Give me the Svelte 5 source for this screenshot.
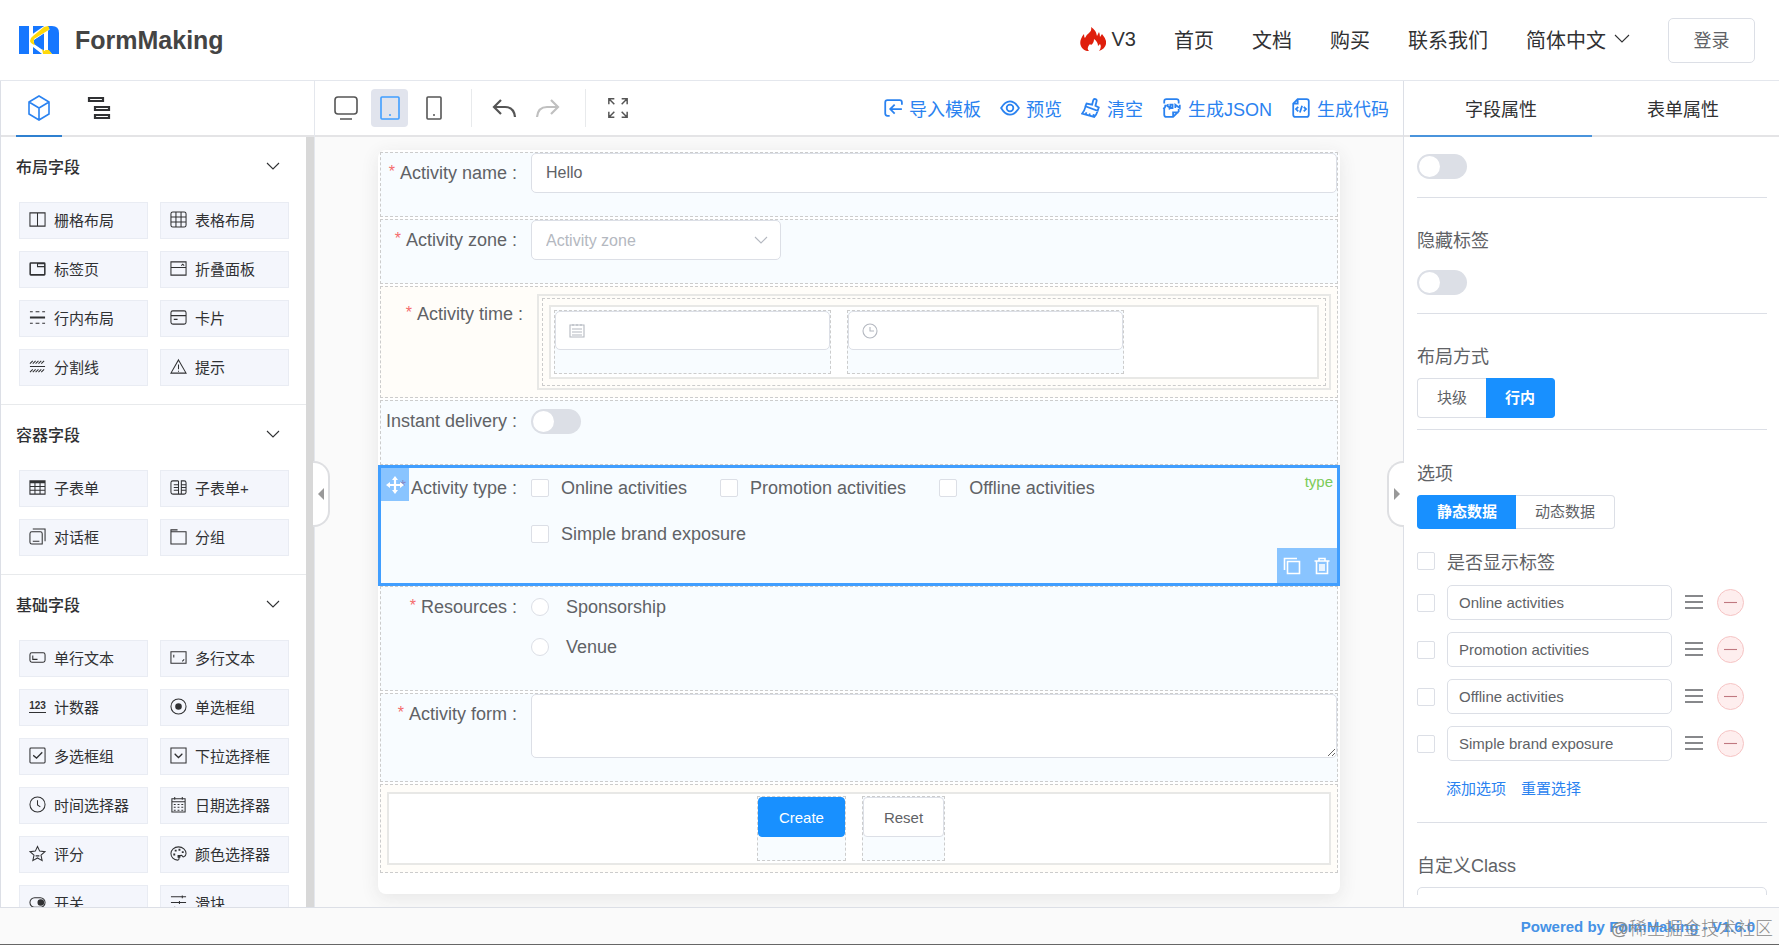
<script lang="ts">
  type Item = { label: string; d?: string; fill?: string; text?: string };
  type Group = { title: string; items: Item[] };

  // every icon lives on an 18x18 grid
  const groups: Group[] = [
    {
      title: '布局字段',
      items: [
        { label: '栅格布局', d: 'M1 2h16v14H1zM9 2v14' },
        { label: '表格布局', d: 'M3 1h12a2 2 0 0 1 2 2v12a2 2 0 0 1-2 2H3a2 2 0 0 1-2-2V3a2 2 0 0 1 2-2zM6.3 1v16M11.7 1v16M1 6.3h16M1 11.7h16' },
        { label: '标签页', d: 'M2 3h14q1 0 1 1v11q0 1-1 1H2q-1 0-1-1V4q0-1 1-1zM9 3v4h8M9 4h7M1.500 3.500h15v12h-15z' },
        { label: '折叠面板', d: 'M1 2h16v14H1zM1 8h16M12 6l1.500-1.500L15 6' },
        { label: '行内布局', d: 'M1 8.500h16M1 9.500h16M1 3h3M7 3h4M14 3h3M1 15h3M7 15h4M14 15h3' },
        { label: '卡片', d: 'M3 2h12a2 2 0 0 1 2 2v10a2 2 0 0 1-2 2H3a2 2 0 0 1-2-2V4a2 2 0 0 1 2-2zM1 7h16M4 11h4' },
        { label: '分割线', d: 'M1 9h16M1 6l3-3M4 6l3-3M7 6l3-3M10 6l3-3M13 6l3-3M1 15l3-3M4 15l3-3M7 15l3-3M10 15l3-3M13 15l3-3' },
        { label: '提示', d: 'M9 2l8 14H1zM9 7v5M9 13.500v1' }
      ]
    },
    {
      title: '容器字段',
      items: [
        { label: '子表单', d: 'M1 2h16v14H1zM1 3h16M1 4h16M1 8h16M1 12h16M6.300 3v13M11.700 3v13' },
        { label: '子表单+', d: 'M9 2v14M9 2H3a2 2 0 0 0-2 2v10a2 2 0 0 0 2 2h12a2 2 0 0 0 2-2V4a2 2 0 0 0-2-2h-3v14M4 6h5M4 9h5M4 12h5M12 6h5M12 9h5M12 12h5' },
        { label: '对话框', d: 'M3 4h9a2 2 0 0 1 2 2v11H3a2 2 0 0 1-2-2V6a2 2 0 0 1 2-2zM4 1h13v13M4 14h7' },
        { label: '分组', d: 'M1 4h16v13H1zM1 4V2h7' }
      ]
    },
    {
      title: '基础字段',
      items: [
        { label: '单行文本', d: 'M3 4h12a2 2 0 0 1 2 2v6a2 2 0 0 1-2 2H3a2 2 0 0 1-2-2V6a2 2 0 0 1 2-2zM4 7v4h5' },
        { label: '多行文本', d: 'M1 3h16v12H1zM4 6v3M13 13l2-2' },
        { label: '计数器', text: '123' },
        { label: '单选框组', d: 'M9 1a8 8 0 1 0 0 16a8 8 0 1 0 0-16z', fill: 'M9 5.500a3.500 3.500 0 1 0 0 7a3.500 3.500 0 1 0 0-7z' },
        { label: '多选框组', d: 'M2 1h14q1 0 1 1v14q0 1-1 1H2q-1 0-1-1V2q0-1 1-1zM4.500 9l3.500 3 6-6M4.500 8.500l3.500 3 6-6' },
        { label: '下拉选择框', d: 'M1 1h16v16H1zM5 7.500l4 4 4-4M5 7l4 4 4-4' },
        { label: '时间选择器', d: 'M9 1a8 8 0 1 0 0 16a8 8 0 1 0 0-16zM9 4.500v5l3 2' },
        { label: '日期选择器', d: 'M2 3h14v14H2zM2 6h14M5 1v3M13 1v3M4 9h2M8 9h2M12 9h2M4 12h2M8 12h2M12 12h2M4 15h2M8 15h2M12 15h2' },
        { label: '评分', d: 'M9 1.500l2.300 5 5.500.6-4.100 3.700 1.200 5.700L9 13.700l-4.900 2.800 1.200-5.700L1.200 7.100l5.500-.6zM7 11.500h4' },
        { label: '颜色选择器', d: 'M9 2C4.500 2 1 5 1 9s3 7 7 7c2 0 1.500-2 1.500-3s1-2 2.500-2 1 2 2.500 1.500S17 10.500 17 9c0-4-3.500-7-8-7z', fill: 'M5 5h2v2H5zM9 4h2v2H9zM12.500 6.500h2v2h-2zM3.500 9h2v2h-2zM8 10.500h3v3H8z' },
        { label: '开关', d: 'M6 4h6a5 5 0 0 1 0 10H6A5 5 0 0 1 6 4z', fill: 'M12.500 5.500a3.500 3.500 0 1 0 0 7a3.500 3.500 0 1 0 0-7z' },
        { label: '滑块', d: 'M1 3h16M1 9h16M1 15h16M13 1.500v3M10 7.500v3M5 13.500v3' }
      ]
    }
  ];

  const nav = ['首页', '文档', '购买', '联系我们'];

  const actions = [
    { label: '导入模板', d: 'M17 6V4a2 2 0 0 0-2-2H4a2 2 0 0 0-2 2v10a2 2 0 0 0 2 2h2M17 10H7M10.500 6L6.500 10l4 4' },
    { label: '预览', d: 'M1 9q3.500-6 8-6t8 6q-3.500 6-8 6T1 9zM9 6a3 3 0 1 0 0 6a3 3 0 1 0 0-6z' },
    { label: '清空', d: 'M10 6l1-4q.5-1.500 2-1t1 2l-1 4 3 1.500-1 3L4 7.500l1-2.500zM4 8q-1 4-3 6l11 3q2-2 3-5.500M4 15l1-2M7.500 16l.5-2M11 16.500l.5-2' },
    { label: '生成JSON', d: 'M2 5V3a2 2 0 0 1 2-2h9a2 2 0 0 1 2 2v2M2 10v5a2 2 0 0 0 2 2h6l5-5v-2M10 17v-4h5M1 9q2 1 2-3M6 6q-3 1 0 2t0 2M7.500 6h2v3h-2zM12 9V6l4 3V6' },
    { label: '生成代码', d: 'M6 1h8a2 2 0 0 1 2 2v12a2 2 0 0 1-2 2H4a2 2 0 0 1-2-2V5zM6 1v4H2M6.500 8l-2 2 2 2M11.500 8l2 2-2 2M10 7l-2 6' }
  ];

  let name = 'Hello';
  let zone = '';
  let layout = 'inline';
  let source = 'static';
  let activities = [
    'Online activities',
    'Promotion activities',
    'Offline activities',
    'Simple brand exposure'
  ];
  const resources = ['Sponsorship', 'Venue'];

  function removeOption(i: number) {
    activities = activities.filter((_, n) => n !== i);
  }
</script>

<div class="app">
  <header class="header">
    <a class="brand" href="#home">
      <svg width="40" height="28" viewBox="0 0 40 28">
        <path fill="#1677ff" d="M0 0h10v28H0zM14 0h11v28H14zM29 0h4q7 0 7 7v21h-7l-4-4z" />
        <path fill="none" stroke="#fff" stroke-width="6" d="M29 1L13 12v5l13 10" />
        <path fill="#1677ff" d="M15 14l10-6v17l-10-7zM14 21l9 7h-9z" />
        <path fill="#ffd90a" d="M29 0q3 3-1 5L15 13q-1 3 1 6-4-1-5-4 0-3 3-5L25 1zM23 23l7 5h-6zM26 24h4l3 4h-6z" />
      </svg>
      <span>FormMaking</span>
    </a>
    <nav class="nav">
      <a class="v3" href="#v3">
        <svg width="26" height="24" viewBox="0 0 26 24">
          <path
            fill="#df1f0c"
            d="M7 24C1 22-1 17 1 12q1-3 3-5 0 3 1 4Q6 8 9 6q3-2 2-6 5 3 6 9l2-4q1 2 1 5l2-3q5 6 4 10-1 5-7 7 3-4 1-7l-2 2q0-4-4-7 0 4-3 6l-1-1q-4 4-1 7z"
          />
        </svg>
        V3
      </a>
      {#each nav as item}
        <a href="#nav">{item}</a>
      {/each}
      <button class="lang">
        简体中文
        <svg width="16" height="10" viewBox="0 0 16 10"><path class="line" d="M1 1l7 7 7-7" /></svg>
      </button>
      <button class="login">登录</button>
    </nav>
  </header>

  <main class="body">
    <aside class="left">
      <div class="left-tabs">
        <button class="tab active" aria-label="组件">
          <svg width="22" height="26" viewBox="0 0 22 26">
            <path class="line bold" d="M11 1l10 6v12l-10 6-10-6V7zM1 7l10 6 10-6M11 13v12" />
          </svg>
        </button>
        <button class="tab" aria-label="大纲">
          <svg width="24" height="26" viewBox="0 0 24 26">
            <path class="line thick" d="M2 3h14v3H2zM8 12h14v3H8zM8 20h14v3H8z" />
          </svg>
        </button>
      </div>
      <div class="palette">
        {#each groups as group}
          <section class="group">
            <div class="group-title">
              <span>{group.title}</span>
              <svg width="14" height="8" viewBox="0 0 14 8"><path class="line" d="M1 1l6 6 6-6" /></svg>
            </div>
            <div class="items">
              {#each group.items as item}
                <button class="item">
                  {#if item.text}
                    <span class="num">{item.text}</span>
                  {:else}
                    <svg width="17" height="17" viewBox="0 0 18 18">
                      <path class="line" d={item.d} />
                      {#if item.fill}<path fill="currentColor" d={item.fill} />{/if}
                    </svg>
                  {/if}
                  <span>{item.label}</span>
                </button>
              {/each}
            </div>
          </section>
        {/each}
      </div>
      <button class="handle handle-left" aria-label="收起左侧"></button>
    </aside>

    <section class="center">
      <div class="toolbar">
        <div class="devices">
          <button class="tool" aria-label="PC">
            <svg width="24" height="26" viewBox="0 0 24 26">
              <path class="line bold" d="M4 2h16a3 3 0 0 1 3 3v11a3 3 0 0 1-3 3H4a3 3 0 0 1-3-3V5a3 3 0 0 1 3-3zM6 24h12" />
            </svg>
          </button>
          <button class="tool selected" aria-label="Pad">
            <svg width="20" height="26" viewBox="0 0 20 26">
              <path class="line bold" d="M2 2h16q1 0 1 1v20q0 1-1 1H2q-1 0-1-1V3q0-1 1-1zM9 20h2" />
            </svg>
          </button>
          <button class="tool" aria-label="Mobile">
            <svg width="16" height="26" viewBox="0 0 16 26">
              <path class="line bold" d="M2 2h12q1 0 1 1v20q0 1-1 1H2q-1 0-1-1V3q0-1 1-1zM7 20h2" />
            </svg>
          </button>
        </div>
        <div class="history">
          <button class="tool" aria-label="撤销">
            <svg width="26" height="22" viewBox="0 0 26 22">
              <path class="line thick" d="M10 3L3 10l7 7M3 10h11q9 0 10 10" />
            </svg>
          </button>
          <button class="tool" aria-label="重做" disabled>
            <svg width="26" height="22" viewBox="0 0 26 22">
              <path class="line thick" d="M16 3l7 7-7 7M23 10H12Q3 10 2 20" />
            </svg>
          </button>
        </div>
        <button class="tool" aria-label="全屏">
          <svg width="22" height="22" viewBox="0 0 24 24">
            <path class="line bold" d="M2 8V2h6M2 2l6 6M16 2h6v6M22 2l-6 6M2 16v6h6M2 22l6-6M22 16v6h-6M22 22l-6-6" />
          </svg>
        </button>
        <div class="actions">
          {#each actions as action}
            <button class="action">
              <svg width="20" height="20" viewBox="0 0 18 18"><path class="line bold" d={action.d} /></svg>
              {action.label}
            </button>
          {/each}
        </div>
      </div>

      <div class="canvas">
        <form class="form" on:submit|preventDefault>
          <div class="widget">
            <label class="label required" for="name">Activity name :</label>
            <input id="name" class="control" type="text" bind:value={name} />
          </div>

          <div class="widget">
            <label class="label required" for="zone">Activity zone :</label>
            <div class="select">
              <select id="zone" class="control" bind:value={zone}>
                <option value="">Activity zone</option>
              </select>
              <svg width="14" height="8" viewBox="0 0 14 8"><path class="line" d="M1 1l6 6 6-6" /></svg>
            </div>
          </div>

          <div class="widget container">
            <span class="label required">Activity time :</span>
            <div class="frame outer">
              <div class="nested">
                <div class="frame inner">
                  <div class="widget picker">
                    <svg width="16" height="16" viewBox="0 0 16 16">
                      <path class="line" d="M1 2h14v12H1zM4 1v2M8 1v2M12 1v2M3 6h10M3 9h10M3 12h10" />
                    </svg>
                    <input class="control" type="text" aria-label="Activity date" />
                  </div>
                  <div class="widget picker">
                    <svg width="16" height="16" viewBox="0 0 16 16">
                      <path class="line" d="M8 1a7 7 0 1 0 0 14a7 7 0 1 0 0-14zM8 4v4h4" />
                    </svg>
                    <input class="control" type="text" aria-label="Activity hour" />
                  </div>
                </div>
              </div>
            </div>
          </div>

          <div class="widget">
            <label class="label" for="delivery">Instant delivery :</label>
            <div class="line-box"><input id="delivery" class="switch" type="checkbox" role="switch" /></div>
          </div>

          <div class="widget current">
            <span class="label required">Activity type :</span>
            <div class="checks">
              {#each activities as option}
                <label class="check"><input class="box" type="checkbox" />{option}</label>
              {/each}
            </div>
            <span class="drag">
              <svg width="18" height="18" viewBox="0 0 18 18">
                <path class="line thick" d="M9 3v12M3 9h12" />
                <path fill="currentColor" d="M9 0l3 4H6zM9 18l3-4H6zM0 9l4-3v6zM18 9l-4-3v6z" />
              </svg>
            </span>
            <span class="model">type</span>
            <div class="ops">
              <button type="button" aria-label="复制">
                <svg width="18" height="18" viewBox="0 0 18 18">
                  <path class="line bold" d="M4.500 4.500h12v12h-12zM1.500 13V1.500H14" />
                </svg>
              </button>
              <button type="button" aria-label="删除">
                <svg width="18" height="18" viewBox="0 0 18 18">
                  <path class="line bold" d="M1.500 4h15M6 4V1.500h6V4M3.500 4v12.500h11V4M7 7v7M9 7v7M11 7v7" />
                </svg>
              </button>
            </div>
          </div>

          <div class="widget">
            <span class="label required">Resources :</span>
            <div class="radios">
              {#each resources as option}
                <label class="radio"><input class="box" type="radio" name="resources" />{option}</label>
              {/each}
            </div>
          </div>

          <div class="widget">
            <label class="label required" for="desc">Activity form :</label>
            <textarea id="desc" class="control"></textarea>
          </div>

          <div class="widget container">
            <div class="frame buttons">
              <div class="widget"><button class="btn primary">Create</button></div>
              <div class="widget"><button class="btn" type="reset">Reset</button></div>
            </div>
          </div>
        </form>
      </div>
    </section>

    <aside class="right">
      <div class="right-tabs">
        <button class="active">字段属性</button>
        <button>表单属性</button>
      </div>
      <div class="props">
        <div class="prop first">
          <input class="switch" type="checkbox" role="switch" aria-label="开启" />
        </div>
        <div class="prop">
          <label class="prop-title" for="hide-label">隐藏标签</label>
          <div class="line-box"><input id="hide-label" class="switch" type="checkbox" role="switch" /></div>
        </div>
        <div class="prop tight">
          <div class="prop-title">布局方式</div>
          <div class="segment">
            <label><input type="radio" bind:group={layout} value="block" /><span>块级</span></label>
            <label><input type="radio" bind:group={layout} value="inline" /><span>行内</span></label>
          </div>
        </div>
        <div class="prop options">
          <div class="prop-title">选项</div>
          <div class="segment small">
            <label><input type="radio" bind:group={source} value="static" /><span>静态数据</span></label>
            <label><input type="radio" bind:group={source} value="dynamic" /><span>动态数据</span></label>
          </div>
          <label class="show-label"><input class="box" type="checkbox" />是否显示标签</label>
          {#each activities as option, i}
            <div class="option">
              <input class="box" type="checkbox" aria-label="默认选中" />
              <input class="control" type="text" aria-label="选项" bind:value={option} />
              <svg width="20" height="16" viewBox="0 0 20 16">
                <path class="line bold" d="M1 1h18M1 7h18M1 13h18" />
              </svg>
              <button class="remove" aria-label="移除" on:click={() => removeOption(i)}>
                <svg width="13" height="13" viewBox="0 0 13 13"><path class="line" d="M0 6.500h13" /></svg>
              </button>
            </div>
          {/each}
          <div class="links">
            <button>添加选项</button>
            <button>重置选择</button>
          </div>
        </div>
        <div class="prop">
          <label class="prop-title" for="class">自定义Class</label>
          <input id="class" class="control" type="text" />
        </div>
      </div>
      <button class="handle handle-right" aria-label="收起右侧"></button>
    </aside>
  </main>

  <footer class="footer">
    <a href="#powered">Powered by FormMaking - V1.6.0</a>
    <span class="mark">@稀土掘金技术社区</span>
  </footer>
</div>

<style>
  .app,
  .app * {
    box-sizing: border-box;
  }
  .app {
    display: flex;
    flex-direction: column;
    height: 100vh;
    overflow: hidden;
    font-family: 'Liberation Sans', 'Noto Sans CJK SC', sans-serif;
    font-size: 18px;
    color: #606266;
    background: #fff;
    border-bottom: 1px solid #666;
  }
  button,
  input,
  select,
  textarea {
    font: inherit;
    color: inherit;
    margin: 0;
  }
  button {
    padding: 0;
    border: 0;
    background: none;
  }
  a {
    color: inherit;
    text-decoration: none;
  }
  svg {
    display: block;
    flex: none;
  }
  .line {
    fill: none;
    stroke: currentColor;
    stroke-width: 1.1;
  }
  .line.bold {
    stroke-width: 1.6;
  }
  .line.thick {
    stroke-width: 2.2;
  }

  .header {
    flex: none;
    display: flex;
    align-items: center;
    justify-content: space-between;
    height: 81px;
    padding: 0 24px 0 19px;
    border-bottom: 1px solid #e4e7ed;
  }
  .brand {
    display: flex;
    align-items: center;
    gap: 16px;
    font-size: 25px;
    font-weight: 700;
    color: #444;
  }
  .nav {
    display: flex;
    align-items: center;
    gap: 38px;
    font-size: 20px;
    color: #303133;
  }
  .nav > * {
    padding-bottom: 2px;
  }
  .v3 {
    display: flex;
    align-items: center;
    gap: 6px;
  }
  .lang {
    display: flex;
    align-items: center;
    gap: 8px;
  }
  .login {
    width: 87px;
    height: 45px;
    border: 1px solid #dcdfe6;
    border-radius: 5px;
    font-size: 18px;
    color: #606266;
  }

  .body {
    flex: 1;
    min-height: 0;
    display: flex;
  }
  .left {
    position: relative;
    flex: none;
    width: 315px;
    display: flex;
    flex-direction: column;
    border-left: 1px solid #dcdfe6;
    border-right: 1px solid #e4e7ed;
    color: #303133;
  }
  .left-tabs,
  .right-tabs,
  .toolbar {
    flex: none;
    display: flex;
    height: 56px;
    border-bottom: 2px solid #e4e4e6;
  }
  .left-tabs {
    gap: 14px;
    padding-left: 15px;
  }
  .tab {
    display: grid;
    place-items: center;
    width: 46px;
    height: 56px;
    border-bottom: 2px solid transparent;
  }
  .tab.active {
    color: #2a82f0;
    border-color: #2f80d0;
  }
  .palette {
    flex: 1;
    min-height: 0;
    overflow: hidden;
    border-right: 8px solid #d8d8d8;
  }
  .group {
    padding-bottom: 18px;
    border-bottom: 1px solid #e8eaec;
  }
  .group-title {
    display: flex;
    align-items: center;
    justify-content: space-between;
    height: 60px;
    padding: 0 26px 2px 15px;
    font-size: 16px;
    font-weight: 500;
  }
  .items {
    display: grid;
    grid-template-columns: 1fr 1fr;
    gap: 12px;
    padding: 5px 17px 0 18px;
  }
  .item {
    display: flex;
    align-items: center;
    gap: 8px;
    height: 37px;
    padding: 0 9px 2px;
    border: 1px solid #e9ecf3;
    background: #f4f6fc;
    font-size: 15px;
  }
  .num {
    width: 17px;
    font-size: 10px;
    font-weight: 700;
    line-height: 12px;
    border-bottom: 1px solid;
  }
  .handle {
    position: absolute;
    top: 380px;
    z-index: 1;
    display: grid;
    place-items: center;
    width: 17px;
    height: 66px;
    border: 2px solid #dedfe2;
    background: #fff;
  }
  .handle::before {
    content: '';
    border: 6px solid transparent;
  }
  .handle-left {
    right: -16px;
    border-left: 0;
    border-radius: 0 16px 16px 0;
  }
  .handle-left::before {
    border-left-width: 0;
    border-right-color: #999;
  }
  .handle-right {
    left: -17px;
    border-right: 0;
    border-radius: 16px 0 0 16px;
  }
  .handle-right::before {
    border-right-width: 0;
    border-left-color: #999;
  }

  .center {
    flex: 1;
    min-width: 0;
    display: flex;
    flex-direction: column;
  }
  .toolbar {
    align-items: center;
    padding: 0 14px 0 12px;
    color: #555;
  }
  .devices,
  .history {
    display: flex;
    height: 38px;
    align-items: center;
    gap: 7px;
    padding-right: 19px;
    margin-right: 13px;
    border-right: 1px solid #e8eaec;
  }
  .tool {
    display: grid;
    place-items: center;
    width: 37px;
    height: 38px;
    border-radius: 4px;
  }
  .tool.selected {
    color: #409eff;
    background: #e1e4ed;
  }
  .tool:disabled {
    color: #c0c0c0;
  }
  .actions {
    display: flex;
    gap: 19px;
    margin-left: auto;
  }
  .action {
    display: flex;
    align-items: center;
    gap: 6px;
    color: #2a82f0;
    white-space: nowrap;
  }

  .canvas {
    flex: 1;
    min-height: 0;
    padding: 13px 20px 0;
    overflow: hidden;
    background: #fafafa;
  }
  .form {
    display: flex;
    flex-direction: column;
    gap: 2px;
    max-width: 962px;
    margin: 0 auto;
    padding: 2px 2px 21px;
    border-radius: 8px;
    background: #fff;
    box-shadow: 0 4px 18px #e6e6e6;
  }
  .widget {
    position: relative;
    display: flex;
    align-items: flex-start;
    padding-bottom: 23px;
    border: 1px dashed #ccc;
    background: #f8fcff;
  }
  .widget.container {
    padding: 7px 6px;
    background: #fffdf9;
  }
  .label {
    flex: none;
    width: 150px;
    padding-right: 14px;
    line-height: 40px;
    text-align: right;
    white-space: nowrap;
  }
  .label.required::before {
    content: '*';
    margin-right: 5px;
    font-size: 16px;
    line-height: 1;
    vertical-align: 2px;
    color: #f56c6c;
  }
  .control {
    width: 100%;
    height: 40px;
    padding: 0 14px;
    border: 1px solid #dcdfe6;
    border-radius: 5px;
    background: #fff;
    font-size: 16px;
    outline: 0;
  }
  textarea.control {
    display: block;
    height: 64px;
    resize: vertical;
  }
  .select {
    position: relative;
    width: 250px;
    color: #b4b8c0;
  }
  .select select {
    display: block;
    appearance: none;
  }
  .select svg {
    position: absolute;
    right: 13px;
    top: 16px;
    pointer-events: none;
  }
  .frame {
    flex: 1;
    border: 2px solid #e8e8e6;
  }
  .outer {
    padding: 2px 3px;
  }
  .nested {
    padding: 6px;
    border: 1px dashed #ccc;
  }
  .inner {
    display: flex;
    gap: 16px;
    padding: 3px;
    background: #fff;
  }
  .picker {
    width: 277px;
    color: #b4b8c0;
  }
  .picker svg {
    position: absolute;
    left: 14px;
    top: 12px;
  }
  .picker .control {
    height: 39px;
    padding-left: 38px;
  }
  .line-box {
    display: flex;
    align-items: center;
    height: 40px;
  }
  .switch {
    appearance: none;
    flex: none;
    width: 50px;
    height: 25px;
    padding: 2px;
    border-radius: 13px;
    background: #dcdfe6;
  }
  .switch::before {
    content: '';
    display: block;
    width: 21px;
    height: 21px;
    border-radius: 50%;
    background: #fff;
  }
  .switch:checked {
    padding-left: 27px;
    background: #1890ff;
  }
  .box {
    appearance: none;
    flex: none;
    width: 18px;
    height: 18px;
    border: 1px solid #dcdfe6;
    border-radius: 2px;
    background: #fff;
  }
  .box[type='radio'] {
    border-radius: 50%;
  }
  .box:checked {
    border-color: #1890ff;
    background: #1890ff;
  }
  .current {
    outline: 3px solid #409eff;
    outline-offset: -1px;
    border-color: transparent;
  }
  .checks {
    display: flex;
    flex-wrap: wrap;
    column-gap: 33px;
    max-width: 700px;
  }
  .check {
    display: flex;
    align-items: center;
    gap: 12px;
    height: 40px;
    margin-bottom: 6px;
  }
  .radio {
    display: flex;
    align-items: center;
    gap: 17px;
    height: 40px;
  }
  .drag,
  .ops {
    position: absolute;
    display: flex;
    align-items: center;
    justify-content: center;
    color: #fff;
    background: rgba(64, 158, 255, 0.6);
  }
  .drag {
    left: 0;
    top: 0;
    width: 28px;
    height: 33px;
  }
  .ops {
    right: 0;
    bottom: 0;
    gap: 12px;
    width: 60px;
    height: 35px;
  }
  .model {
    position: absolute;
    right: 4px;
    top: 4px;
    font-size: 15px;
    line-height: 20px;
    color: #7ccb58;
  }
  .buttons {
    display: flex;
    justify-content: center;
    padding: 2px;
    background: #fff;
  }
  .buttons .widget {
    margin-right: 16px;
  }
  .btn {
    height: 40px;
    padding: 0 20px;
    border: 1px solid #dcdfe6;
    border-radius: 4px;
    background: #fff;
    font-size: 15px;
  }
  .btn.primary {
    border-color: #1890ff;
    background: #1890ff;
    color: #fff;
  }

  .right {
    position: relative;
    flex: none;
    width: 376px;
    display: flex;
    flex-direction: column;
    border-left: 1px solid #dcdfe6;
    padding-bottom: 12px;
  }
  .right-tabs {
    padding: 0 5px 0 6px;
    color: #303133;
  }
  .right-tabs button {
    flex: 1;
    height: 56px;
    border-bottom: 2px solid transparent;
  }
  .right-tabs .active {
    border-color: #4a94dc;
  }
  .props {
    flex: 1;
    min-height: 0;
    overflow: hidden;
    padding: 0 12px 0 13px;
  }
  .prop {
    padding: 22px 0 11px;
    border-bottom: 1px solid #dcdfe6;
  }
  .prop.first {
    display: flex;
    padding: 17px 0 18px;
  }
  .prop.options {
    padding: 23px 0 9px;
  }
  .prop-title {
    display: block;
    line-height: 42px;
  }
  .segment {
    display: flex;
    font-size: 15px;
  }
  .segment input {
    position: absolute;
    opacity: 0;
  }
  .segment span {
    display: block;
    padding: 0 19px;
    border: 1px solid #dcdfe6;
    line-height: 38px;
  }
  .segment label:first-child span {
    border-radius: 4px 0 0 4px;
    border-right: 0;
  }
  .segment label:last-child span {
    border-radius: 0 4px 4px 0;
    border-left: 0;
  }
  .segment.small span {
    line-height: 32px;
  }
  .segment input:checked + span {
    border-color: #1890ff;
    background: #1890ff;
    color: #fff;
    font-weight: 700;
  }
  .show-label {
    display: flex;
    align-items: center;
    gap: 12px;
    height: 64px;
    margin-bottom: -8px;
  }
  .option {
    display: flex;
    align-items: center;
    margin-bottom: 12px;
  }
  .option .control {
    width: 225px;
    height: 35px;
    margin: 0 12px;
    padding: 0 11px;
    font-size: 15px;
  }
  .remove {
    display: grid;
    place-items: center;
    width: 27px;
    height: 27px;
    margin-left: 13px;
    border: 1px solid #f6c4c4;
    border-radius: 50%;
    background: #feeeee;
    color: #c07880;
  }
  .links {
    display: flex;
    gap: 15px;
    padding: 4px 0 12px 29px;
    font-size: 15px;
    line-height: 24px;
    color: #2a82f0;
  }

  .footer {
    position: relative;
    flex: none;
    display: flex;
    align-items: center;
    justify-content: flex-end;
    height: 37px;
    padding-right: 24px;
    border-top: 1px solid #dcdfe6;
    background: #fafafa;
    font-size: 15px;
    font-weight: 700;
    color: #4592e6;
  }
  .mark {
    position: absolute;
    right: 6px;
    bottom: 2px;
    font-size: 18px;
    font-weight: 300;
    line-height: 26px;
    color: #8a8a8a;
  }
</style>
